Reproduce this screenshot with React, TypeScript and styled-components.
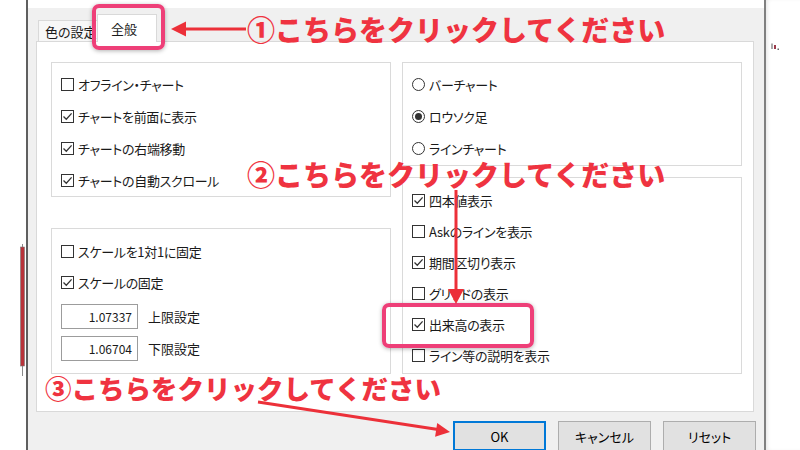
import React from "react";
import styled, { createGlobalStyle } from "styled-components";

const GlobalStyle = createGlobalStyle`
  html, body {
    margin: 0;
    padding: 0;
    background: #ffffff;
  }
  body {
    font-family: "Noto Sans CJK JP", "Noto Sans", sans-serif;
  }
`;

const Screen = styled.div`
  position: relative;
  width: 800px;
  height: 450px;
  overflow: hidden;
  display: flex;
  background: #ffffff;
`;

const ChartStrip = styled.div`
  width: 26px;
  flex-shrink: 0;
  background: #ffffff;
`;

const Window = styled.div`
  width: 740px;
  flex-shrink: 0;
  box-sizing: border-box;
  border-left: 2px solid #5f5f5f;
  border-right: 2px solid #808080;
  padding-top: 8px;
  display: flex;
  flex-direction: column;
  background: #ffffff;
`;

const RightStrip = styled.div`
  flex: 1;
  background: #ffffff;
  padding: 32px 0 0 5px;
  box-shadow: inset 3px 0 4px -2px rgba(0, 0, 0, 0.12);
`;

const DialogBody = styled.div`
  flex: 1;
  background: #f0f0f0;
  padding: 6px 10px 0 8px;
  display: flex;
  flex-direction: column;
  font-family: "Noto Sans CJK JP", "Noto Sans", sans-serif;
  font-feature-settings: "palt";
  color: #1a1a1a;
`;

const TabRow = styled.div`
  display: flex;
  align-items: flex-end;
  height: 27px;
  margin-left: 2px;
`;

const Tab = styled.div<{ $active?: boolean }>`
  box-sizing: border-box;
  position: relative;
  font-size: 13px;
  border: 1px solid #d9d9d9;
  border-bottom: none;
  white-space: nowrap;
  overflow: hidden;
  ${(p) =>
    p.$active
      ? `
    z-index: 2;
    width: 60px;
    height: 28px;
    margin-left: -2px;
    margin-bottom: -1px;
    background: #ffffff;
    padding: 4px 0 0 13px;
  `
      : `
    width: 61px;
    height: 21px;
    background: #f7f7f7;
    padding: 1px 0 0 6px;
  `}
`;

const Panel = styled.div`
  position: relative;
  z-index: 1;
  box-sizing: border-box;
  height: 371px;
  background: #ffffff;
  border: 1px solid #d9d9d9;
  padding: 20px 11px 0 14px;
  display: grid;
  grid-template-columns: 340px 340px;
  column-gap: 11px;
  align-content: start;
`;

const Column = styled.div<{ $gap: number }>`
  display: flex;
  flex-direction: column;
  gap: ${(p) => p.$gap}px;
`;

const GroupBox = styled.div<{ $height: number; $padTop: number }>`
  box-sizing: border-box;
  height: ${(p) => p.$height}px;
  border: 1px solid #dadada;
  padding: ${(p) => p.$padTop}px 0 0 9px;
  display: flex;
  flex-direction: column;
`;

const Row = styled.div<{ $h?: number }>`
  display: flex;
  align-items: center;
  gap: 4px;
  height: ${(p) => p.$h ?? 32}px;
  font-size: 13px;
  letter-spacing: -0.3px;
  white-space: nowrap;
`;

const Box = styled.span`
  box-sizing: border-box;
  width: 13px;
  height: 13px;
  flex-shrink: 0;
  border: 1px solid #333333;
  background: #ffffff;
  display: flex;
  align-items: center;
  justify-content: center;
`;

const RadioDot = styled.span<{ $on?: boolean }>`
  box-sizing: border-box;
  width: 13px;
  height: 13px;
  flex-shrink: 0;
  border: 1px solid #333333;
  border-radius: 50%;
  background: #ffffff;
  display: flex;
  align-items: center;
  justify-content: center;
  &::after {
    content: "";
    display: ${(p) => (p.$on ? "block" : "none")};
    width: 7px;
    height: 7px;
    border-radius: 50%;
    background: #333333;
  }
`;

const Fields = styled.div`
  display: flex;
  flex-direction: column;
  gap: 7px;
  margin-top: 6px;
`;

const FieldRow = styled.div`
  display: flex;
  align-items: center;
  gap: 10px;
  font-size: 13px;
`;

const NumberBox = styled.div`
  box-sizing: border-box;
  width: 77px;
  height: 25px;
  border: 1px solid #9c9c9c;
  background: #ffffff;
  font-size: 12px;
  text-align: right;
  padding-right: 5px;
  line-height: 23px;
`;

const ButtonBar = styled.div`
  display: flex;
  justify-content: flex-end;
  gap: 12px;
  margin-top: 9px;
  margin-right: -2px;
`;

const Button = styled.div<{ $primary?: boolean }>`
  box-sizing: border-box;
  width: 93px;
  height: 30px;
  flex-shrink: 0;
  background: #e1e1e1;
  border: ${(p) => (p.$primary ? "2px solid #0078d7" : "1px solid #adadad")};
  font-size: 13px;
  display: flex;
  align-items: center;
  justify-content: center;
  color: #000000;
`;

const Overlay = styled.div`
  position: absolute;
  inset: 0;
  z-index: 10;
  pointer-events: none;
`;

const Callout = styled.div<{ $top: number; $left: number; $size: number }>`
  position: absolute;
  top: ${(p) => p.$top}px;
  left: ${(p) => p.$left}px;
  font-family: "Noto Sans CJK JP", sans-serif;
  font-size: ${(p) => p.$size}px;
  font-weight: 900;
  line-height: 1;
  color: #ef3340;
  white-space: nowrap;
`;

const Highlight = styled.div<{ $top: number; $left: number; $w: number; $h: number }>`
  position: absolute;
  top: ${(p) => p.$top}px;
  left: ${(p) => p.$left}px;
  width: ${(p) => p.$w}px;
  height: ${(p) => p.$h}px;
  box-sizing: border-box;
  border: 4px solid #ee3f78;
  border-radius: 7px;
  box-shadow: 0 1px 4px rgba(0, 0, 0, 0.3);
`;

const Arrows = styled.svg`
  position: absolute;
  inset: 0;
`;

const Check = () => (
  <svg width="11" height="11" viewBox="0 0 11 11">
    <path d="M1.5 5.5 L4.3 8.3 L9.6 2.4" fill="none" stroke="#333" strokeWidth="1.3" />
  </svg>
);

const CheckItem = ({ label, checked, h }: { label: string; checked?: boolean; h?: number }) => (
  <Row $h={h}>
    <Box>{checked && <Check />}</Box>
    <span>{label}</span>
  </Row>
);

const RadioItem = ({ label, on }: { label: string; on?: boolean }) => (
  <Row>
    <RadioDot $on={on} />
    <span>{label}</span>
  </Row>
);

const RED = "#ec3039";

export default function App() {
  return (
    <>
      <GlobalStyle />
      <Screen>
        <ChartStrip>
          <svg width="26" height="450">
            <line x1="22.5" y1="244" x2="22.5" y2="376" stroke="#8a8a8a" strokeWidth="1" />
            <rect x="20.5" y="247" width="4" height="119" fill="#b8333a" stroke="#7a7a7a" strokeWidth="0.6" />
          </svg>
        </ChartStrip>

        <Window>
          <DialogBody>
            <TabRow>
              <Tab>色の設定</Tab>
              <Tab $active>全般</Tab>
            </TabRow>

            <Panel>
              <Column $gap={31}>
                <GroupBox $height={135} $padTop={5}>
                  <CheckItem label="オフライン・チャート" />
                  <CheckItem label="チャートを前面に表示" checked />
                  <CheckItem label="チャートの右端移動" checked />
                  <CheckItem label="チャートの自動スクロール" checked />
                </GroupBox>
                <GroupBox $height={146} $padTop={6.5}>
                  <CheckItem label="スケールを1対1に固定" h={31} />
                  <CheckItem label="スケールの固定" checked h={31} />
                  <Fields>
                    <FieldRow>
                      <NumberBox>1.07337</NumberBox>
                      <span>上限設定</span>
                    </FieldRow>
                    <FieldRow>
                      <NumberBox>1.06704</NumberBox>
                      <span>下限設定</span>
                    </FieldRow>
                  </Fields>
                </GroupBox>
              </Column>

              <Column $gap={11}>
                <GroupBox $height={104} $padTop={5}>
                  <RadioItem label="バーチャート" />
                  <RadioItem label="ロウソク足" on />
                  <RadioItem label="ラインチャート" />
                </GroupBox>
                <GroupBox $height={197} $padTop={7}>
                  <CheckItem label="四本値表示" checked h={31} />
                  <CheckItem label="Askのラインを表示" h={31} />
                  <CheckItem label="期間区切り表示" checked h={31} />
                  <CheckItem label="グリッドの表示" h={31} />
                  <CheckItem label="出来高の表示" checked h={31} />
                  <CheckItem label="ライン等の説明を表示" h={31} />
                </GroupBox>
              </Column>
            </Panel>

            <ButtonBar>
              <Button $primary>OK</Button>
              <Button>キャンセル</Button>
              <Button>リセット</Button>
            </ButtonBar>
          </DialogBody>
        </Window>

        <RightStrip>
          <svg width="12" height="8">
            <line x1="1" y1="0.5" x2="1" y2="6" stroke="#555" strokeWidth="1" />
            <rect x="3" y="2" width="2" height="4" fill="#9b3a4a" />
            <rect x="6.5" y="5.5" width="1.5" height="1.5" fill="#666" />
          </svg>
        </RightStrip>

        <Overlay>
          <Highlight $top={4} $left={92} $w={73} $h={46} />
          <Highlight $top={303} $left={382} $w={152} $h={45} />

          <Callout $top={15} $left={247} $size={28}>
            ①こちらをクリックしてください
          </Callout>
          <Callout $top={160} $left={247} $size={28}>
            ②こちらをクリックしてください
          </Callout>
          <Callout $top={375} $left={45} $size={26.5}>
            ③こちらをクリックしてください
          </Callout>

          <Arrows width="800" height="450" viewBox="0 0 800 450">
            <line x1="246" y1="29" x2="182" y2="29" stroke={RED} strokeWidth="3" />
            <polygon points="171,29 186,21.5 186,36.5" fill={RED} />

            <line x1="456" y1="190" x2="456" y2="292" stroke={RED} strokeWidth="3" />
            <polygon points="456,304 448,289 464,289" fill={RED} />

            <line x1="258" y1="402" x2="438" y2="429.5" stroke={RED} strokeWidth="3" />
            <polygon points="450,432 437.2,423 435.1,436.8" fill={RED} />
          </Arrows>
        </Overlay>
      </Screen>
    </>
  );
}
